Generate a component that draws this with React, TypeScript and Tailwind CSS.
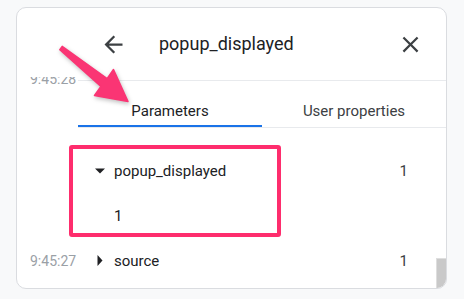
import React from "react";

interface Row {
  time?: string;
  name: string;
  value?: string;
  open?: boolean;
  child?: boolean;
}

const rows: Row[] = [
  { name: "popup_displayed", value: "1", open: true },
  { name: "1", child: true },
  { time: "9:45:27", name: "source", value: "1" },
];

function BackIcon() {
  return (
    <svg width="27" height="27" viewBox="0 0 24 24" fill="#3c4043">
      <path d="M20 11H7.83l5.59-5.59L12 4l-8 8 8 8 1.41-1.41L7.83 13H20v-2z" />
    </svg>
  );
}

function CloseIcon() {
  return (
    <svg width="27" height="27" viewBox="0 0 24 24" fill="#3c4043">
      <path d="M19 6.41L17.59 5 12 10.59 6.41 5 5 6.41 10.59 12 5 17.59 6.41 19 12 13.41 17.59 19 19 17.59 13.41 12z" />
    </svg>
  );
}

function Caret({ open }: { open?: boolean }) {
  return open ? (
    <svg width="10" height="6" viewBox="0 0 10 6">
      <polygon points="0,0.5 10,0.5 5,5.5" fill="#202124" />
    </svg>
  ) : (
    <svg width="6" height="11" viewBox="0 0 6 11">
      <polygon points="0.5,0 5.5,5.5 0.5,11" fill="#202124" />
    </svg>
  );
}

export default function App() {
  return (
    <div className="relative w-[464px] h-[299px] bg-[#f8f9fa] pt-[7px] pl-[16px] overflow-hidden" style={{ fontFamily: "Roboto, 'Noto Sans', sans-serif" }}>
      <div className="relative w-[431px] h-[282px] bg-white border border-[#dadce0] rounded-[10px] overflow-hidden flex flex-col">
        {/* header */}
        <div className="h-[69px] shrink-0 flex items-center pt-[3px] pl-[83px] pr-[22px]">
          <BackIcon />
          <div className="ml-[32px] flex-1 text-[18px] leading-[24px] text-[#202124]">popup_displayed</div>
          <CloseIcon />
        </div>

        {/* tabs */}
        <div className="flex shrink-0">
          <div className="w-[61px] h-[12px] overflow-hidden flex flex-col justify-end pl-[13px]">
            <div className="text-[14px] leading-[20px] text-[#9aa0a6]">9:45:28</div>
          </div>
          <div className="flex-1 mt-[3px] border-t border-[#e8eaed]">
            <div className="grid grid-cols-2 border-b border-[#e8eaed]">
              <div className="h-[46px] pt-[20px] text-center text-[15px] leading-[20px] text-[#202124] border-b-2 border-[#1a73e8]">Parameters</div>
              <div className="h-[46px] pt-[20px] text-center text-[15px] leading-[20px] text-[#3c4043]">User properties</div>
            </div>
          </div>
        </div>

        {/* list */}
        <div className="flex flex-1">
          <div className="flex-1 pt-[20px]">
            {rows.map((row, i) => (
              <div key={i} className="h-[45px] flex items-center text-[15px] leading-[20px]">
                <div className="w-[61px] pl-[13px] text-[14px] text-[#9aa0a6]">{row.time}</div>
                <div className="w-[36px] pl-[17px] flex items-center">
                  <div className="w-[10px] flex justify-center">{!row.child && <Caret open={row.open} />}</div>
                </div>
                <div className="flex-1 text-[#202124]">{row.name}</div>
                <div className="pr-[28px] text-[#3c4043]">{row.value}</div>
              </div>
            ))}
          </div>
          <div className="w-[10px] flex flex-col justify-end">
            <div className="h-[30px] bg-[#c9c9c9] border-l border-t border-[#dedede]" />
          </div>
        </div>

        {/* highlight box */}
        <div className="absolute left-[52px] top-[137px] w-[212px] h-[92px] border-[4px] border-[#fe2d6d] rounded-[3px]" />
      </div>

      {/* pointer arrow */}
      <svg className="absolute left-0 top-0 pointer-events-none" width="464" height="299" style={{ filter: "drop-shadow(1px 2px 2px rgba(0,0,0,0.25))" }}>
        <polygon points="62.2,46.4 107.1,78.6 113.5,69.5 128,101.5 94.5,95.5 100.9,86.4 59.8,49.6" fill="#fa3574" strokeLinejoin="round" stroke="#fa3574" strokeWidth="1.5" />
      </svg>
    </div>
  );
}
